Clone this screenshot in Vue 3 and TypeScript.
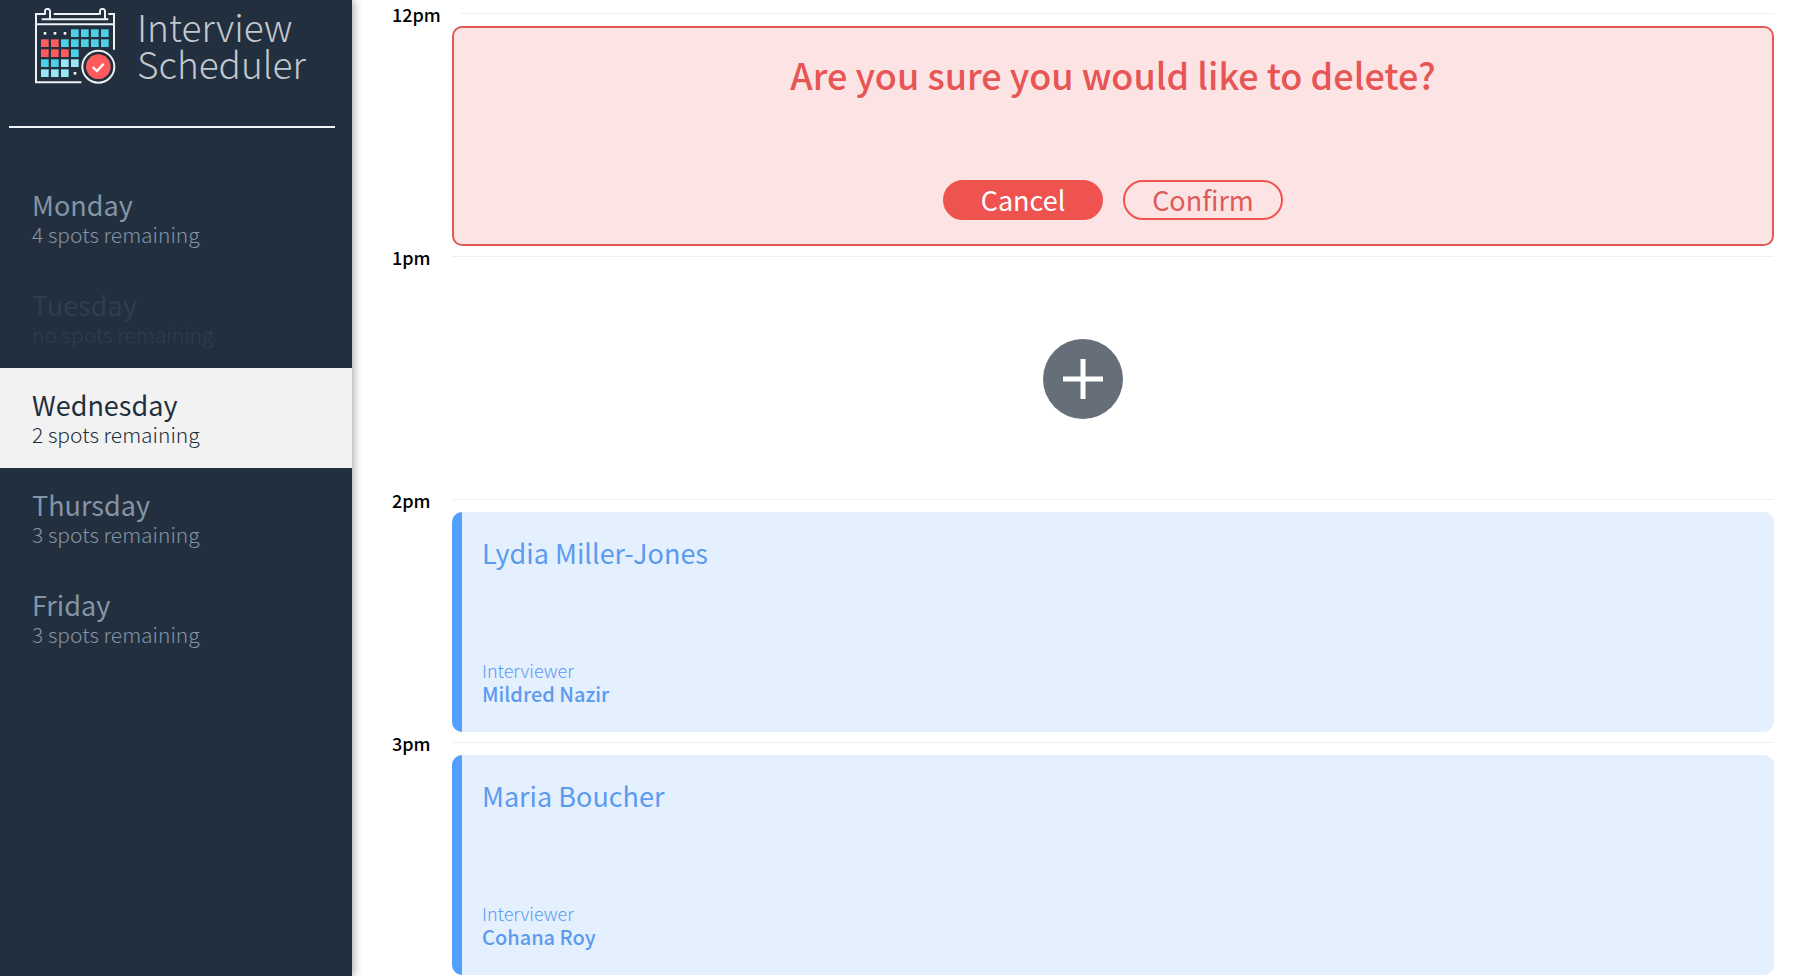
<script setup lang="ts">
import { ref } from 'vue'

interface Day {
  name: string
  spots: number
}

interface Slot {
  time: string
  mode: 'confirm' | 'empty' | 'show'
  student?: string
  interviewer?: string
}

const days: Day[] = [
  { name: 'Monday', spots: 4 },
  { name: 'Tuesday', spots: 0 },
  { name: 'Wednesday', spots: 2 },
  { name: 'Thursday', spots: 3 },
  { name: 'Friday', spots: 3 },
]

const selected = ref('Wednesday')

const slots = ref<Slot[]>([
  { time: '12pm', mode: 'confirm' },
  { time: '1pm', mode: 'empty' },
  { time: '2pm', mode: 'show', student: 'Lydia Miller-Jones', interviewer: 'Mildred Nazir' },
  { time: '3pm', mode: 'show', student: 'Maria Boucher', interviewer: 'Cohana Roy' },
])

// Calendar cells of the logo: column, row, colour
const red = '#ff5a5c'
const blue = '#4dd0e6'
const pale = '#97e7f5'
const grid: string[][] = [
  ['', '', '', blue, blue, blue, blue],
  [red, red, blue, blue, blue, blue, blue],
  [red, red, red, blue, '', '', ''],
  [blue, blue, pale, pale, '', '', ''],
  [pale, pale, pale, '', '', '', ''],
]
const cells = grid.flatMap((row, r) =>
  row.map((fill, c) => ({ x: 48 + c * 30, y: 88 + r * 30, fill })).filter((cell) => cell.fill),
)

function spotsText(spots: number): string {
  return `${spots === 0 ? 'no' : spots} spots remaining`
}
</script>

<template>
  <div class="layout">
    <aside class="sidebar">
      <div class="brand">
        <svg class="brand-icon" viewBox="30 24 243 228" aria-hidden="true">
          <g fill="none" stroke="#eef2f5" stroke-width="6">
            <path d="M60 42H33V247H169" />
            <path d="M86 42H222" />
            <path d="M250 42H267V149" />
            <path d="M33 73H267" />
            <path d="M50 58H250" />
            <path d="M60 44V34a7 7 0 0 1 15 0V58" />
            <path d="M225 44V34a7 7 0 0 1 15 0V58" />
            <circle cx="220" cy="200" r="48" />
          </g>
          <g fill="#eef2f5">
            <rect x="56" y="96" width="8" height="8" />
            <rect x="86" y="96" width="8" height="8" />
            <rect x="116" y="96" width="8" height="8" />
            <rect x="146" y="216" width="8" height="8" />
          </g>
          <rect
            v-for="cell in cells"
            :key="`${cell.x}-${cell.y}`"
            :x="cell.x"
            :y="cell.y"
            width="23"
            height="23"
            :fill="cell.fill"
          />
          <circle cx="220" cy="200" r="37" fill="#ff5a5c" />
          <path d="M203 201L216 213L236 191" fill="none" stroke="#fff" stroke-width="7" />
        </svg>
        <span class="brand-name">Interview<br />Scheduler</span>
      </div>
      <hr class="divider" />
      <nav class="days">
        <button
          v-for="day in days"
          :key="day.name"
          type="button"
          class="day"
          :class="{ selected: day.name === selected, full: day.spots === 0 }"
          :disabled="day.spots === 0"
          @click="selected = day.name"
        >
          <span class="day-name">{{ day.name }}</span>
          <span class="day-spots">{{ spotsText(day.spots) }}</span>
        </button>
      </nav>
    </aside>

    <main class="schedule">
      <article v-for="slot in slots" :key="slot.time" class="slot">
        <header class="slot-header">
          <h4 class="slot-time">{{ slot.time }}</h4>
          <hr class="slot-line" />
        </header>

        <section v-if="slot.mode === 'confirm'" class="card confirm">
          <h1 class="confirm-text">Are you sure you would like to delete?</h1>
          <div class="actions">
            <button type="button" class="btn solid">Cancel</button>
            <button type="button" class="btn outline">Confirm</button>
          </div>
        </section>

        <div v-else-if="slot.mode === 'empty'" class="empty">
          <button type="button" class="add" aria-label="Add">
            <svg viewBox="0 0 80 80" aria-hidden="true">
              <circle cx="40" cy="40" r="40" fill="#666e7a" />
              <path d="M40 20V60M20 40H60" stroke="#fff" stroke-width="5" />
            </svg>
          </button>
        </div>

        <section v-else class="card show">
          <h2 class="student">{{ slot.student }}</h2>
          <div>
            <h4 class="role">Interviewer</h4>
            <h3 class="interviewer">{{ slot.interviewer }}</h3>
          </div>
        </section>
      </article>
    </main>
  </div>
</template>

<style>
body {
  margin: 0;
  background: #fff;
}
</style>

<style scoped>
.layout {
  display: flex;
  min-height: 100vh;
  font-family: 'Noto Sans CJK SC', 'Noto Sans', sans-serif;
}

.layout * {
  box-sizing: border-box;
}

h1,
h2,
h3,
h4,
hr {
  margin: 0;
}

button {
  font-family: inherit;
  cursor: pointer;
}

.sidebar {
  flex: 0 0 352px;
  background: #222f3e;
  box-shadow: 2px 0 8px rgba(34, 47, 62, 0.4);
}

.brand {
  display: flex;
  align-items: flex-start;
  gap: 21px;
  padding: 8px 0 0 35px;
  height: 126px;
}

.brand-icon {
  width: 81px;
  height: 76px;
}

.brand-name {
  color: #c3c8ce;
  font-size: 37px;
  font-weight: 300;
  line-height: 37px;
}

.divider {
  height: 2px;
  margin: 0 17px 40px 9px;
  border: 0;
  background: #f2f6f8;
}

.days {
  display: flex;
  flex-direction: column;
}

.day {
  display: flex;
  flex-direction: column;
  justify-content: center;
  height: 100px;
  padding: 2px 32px 0;
  border: 0;
  background: transparent;
  color: #8395a7;
  text-align: left;
}

.day.selected {
  background: #f2f2f2;
  color: #222f3e;
}

.day.full {
  opacity: 0.14;
  cursor: default;
}

.day-name {
  font-size: 27px;
  line-height: 30px;
}

.day-spots {
  font-size: 21px;
  font-weight: 300;
  line-height: 28px;
}

.schedule {
  flex: 1;
  min-width: 0;
  padding: 3px 21px 0 40px;
}

.slot-header {
  display: flex;
  align-items: flex-start;
  height: 23px;
}

.slot-time {
  min-width: 40px;
  margin-right: 20px;
  color: #000;
  font-size: 18px;
  font-weight: 500;
  line-height: 22px;
}

.slot-line {
  flex: 1;
  height: 1px;
  margin-top: 10px;
  border: 0;
  background: #eeeff0;
}

.card {
  display: flex;
  flex-direction: column;
  justify-content: space-between;
  height: 220px;
  margin-left: 60px;
  border-radius: 10px;
}

.confirm {
  align-items: center;
  padding: 24px;
  border: 2px solid #e05a5a;
  background: #fce4e4;
}

.confirm-text {
  color: #e85555;
  font-size: 36px;
  font-weight: 500;
  line-height: 44px;
}

.actions {
  display: flex;
  gap: 20px;
}

.btn {
  width: 160px;
  height: 40px;
  padding: 0;
  border: 2px solid #ef5350;
  border-radius: 20px;
  font-size: 27px;
  line-height: 36px;
}

.solid {
  background: #ef5350;
  color: #fff;
}

.outline {
  background: transparent;
  color: #e05a5a;
}

.empty {
  display: flex;
  align-items: center;
  justify-content: center;
  height: 220px;
}

.add {
  width: 80px;
  height: 80px;
  padding: 0;
  border: 0;
  border-radius: 50%;
  background: transparent;
}

.add svg {
  display: block;
}

.show {
  padding: 22px 20px 26px;
  border-left: 10px solid #539fff;
  background: #e4f0fe;
  color: #5c9af0;
}

.student {
  font-size: 27px;
  font-weight: 400;
  line-height: 38px;
}

.role {
  font-size: 18px;
  font-weight: 300;
  line-height: 24px;
}

.interviewer {
  font-size: 20px;
  font-weight: 500;
  line-height: 24px;
}
</style>
